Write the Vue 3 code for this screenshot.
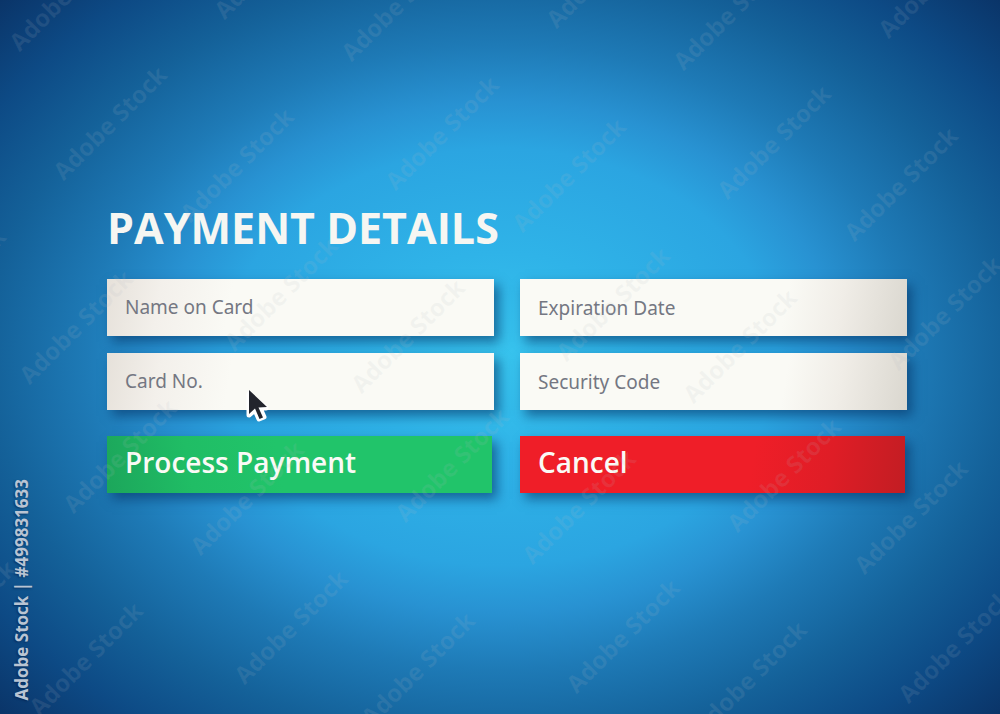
<script setup>
import { ref } from 'vue'

const form = ref({ name: '', number: '', expiry: '', code: '' })

// Diagonal marks sit on a skewed lattice, two per cell.
const marks = []
for (let row = -1; row <= 3; row++) {
  for (let col = -3; col <= 4; col++) {
    for (let k = 0; k < 2; k++) {
      const x = Math.round(109 + row * 171 + col * 332 + k * 127)
      const y = Math.round(122 + row * 171 + col * 9.5 + k * 42)
      if (x > -60 && x < 1060 && y > -60 && y < 774) marks.push({ x, y })
    }
  }
}
</script>

<template>
  <main class="page">
    <form class="payment" @submit.prevent>
      <h1 class="title">PAYMENT DETAILS</h1>
      <div class="grid">
        <input v-model="form.name" class="field left" type="text" placeholder="Name on Card" aria-label="Name on Card" />
        <input v-model="form.expiry" class="field right" type="text" placeholder="Expiration Date" aria-label="Expiration Date" />
        <input v-model="form.number" class="field left" type="text" placeholder="Card No." aria-label="Card No." />
        <input v-model="form.code" class="field right" type="text" placeholder="Security Code" aria-label="Security Code" />
      </div>
      <div class="grid actions">
        <button class="btn pay" type="submit">Process Payment</button>
        <button class="btn cancel" type="reset">Cancel</button>
      </div>
    </form>

    <svg class="marks" aria-hidden="true">
      <text
        v-for="(m, i) in marks"
        :key="i"
        class="mark"
        text-anchor="middle"
        :transform="`translate(${m.x} ${m.y}) rotate(-45)`"
        y="10"
      >Adobe Stock</text>
    </svg>

    <p class="credit">Adobe Stock | #499831633</p>

    <svg class="pointer" viewBox="0 0 26 38" aria-hidden="true">
      <path d="M3 6V27L9 22L13 31L18 29L14 20H20Z" fill="#fff" stroke="#fff" stroke-width="5" stroke-linejoin="round" />
      <path d="M3 2V26L9 20.500L13.500 31L17 29.500L12.500 19.500L21 19Z" fill="#22242c" />
    </svg>
  </main>
</template>

<style>
body {
  margin: 0;
}
</style>

<style scoped>
.page {
  position: relative;
  box-sizing: border-box;
  min-height: 100vh;
  padding: 0 93px 20px 107px;
  display: flex;
  flex-direction: column;
  justify-content: center;
  overflow: hidden;
  font-family: "Open Sans", "Noto Sans", sans-serif;
  background: radial-gradient(
    ellipse 69% 73% at 50% 50%,
    #38c4ee 0%,
    #2fb3e8 20%,
    #2ba5e1 40%,
    #2892d2 49%,
    #1e7ab6 60%,
    #146199 74%,
    #0d4a85 87%,
    #0a3468 100%
  );
}
.title {
  margin: 0 0 25px 0;
  font-size: 43px;
  line-height: 52px;
  font-weight: 700;
  color: #f6f6f2;
  white-space: nowrap;
}
.grid {
  display: grid;
  grid-template-columns: 1fr 1fr;
  gap: 17px 26px;
}
.actions {
  margin-top: 26px;
}
.field,
.btn {
  box-sizing: border-box;
  min-width: 0;
  height: 57px;
  border: 0;
  border-radius: 0;
  margin: 0;
  font-family: inherit;
  box-shadow: 5px 6px 11px rgba(5, 50, 100, 0.6);
}
.field {
  padding: 0 18px;
  font-family: "Noto Sans", sans-serif;
  font-size: 19px;
  color: #6b6f7b;
  outline: 0;
}
.field::placeholder {
  color: #747782;
  opacity: 1;
}
.left {
  background: linear-gradient(100deg, #e6e1da 0%, #f3f0eb 14%, #fafaf5 32%);
}
.right {
  padding-top: 2px;
  background: linear-gradient(100deg, #fafaf5 68%, #f0ede7 82%, #dad7cf 100%);
}
.btn {
  margin-right: 2px;
  padding: 0 18px 4px;
  text-align: left;
  font-size: 28px;
  font-weight: 600;
  color: #fafaf6;
}
.pay {
  background: linear-gradient(80deg, #1ca65b 0%, #20bd65 22%, #21c46a 45%);
}
.cancel {
  background: linear-gradient(100deg, #ef1e28 60%, #df1d26 80%, #c21d23 100%);
}
.marks {
  position: absolute;
  inset: 0;
  width: 100%;
  height: 100%;
  pointer-events: none;
}
.mark {
  font-family: "Noto Sans", sans-serif;
  font-size: 24px;
  font-weight: 700;
  fill: #b4bac4;
  fill-opacity: 0.12;
}
.credit {
  position: absolute;
  left: 10px;
  bottom: 14px;
  margin: 0;
  writing-mode: vertical-rl;
  transform: rotate(180deg);
  font-size: 17px;
  line-height: 24px;
  font-weight: 700;
  color: #b9c4d3;
  text-shadow: -1px -1px 2px rgba(0, 20, 60, 0.5);
  white-space: nowrap;
}
.pointer {
  position: absolute;
  left: 246px;
  top: 388px;
  width: 26px;
  height: 38px;
}
</style>
